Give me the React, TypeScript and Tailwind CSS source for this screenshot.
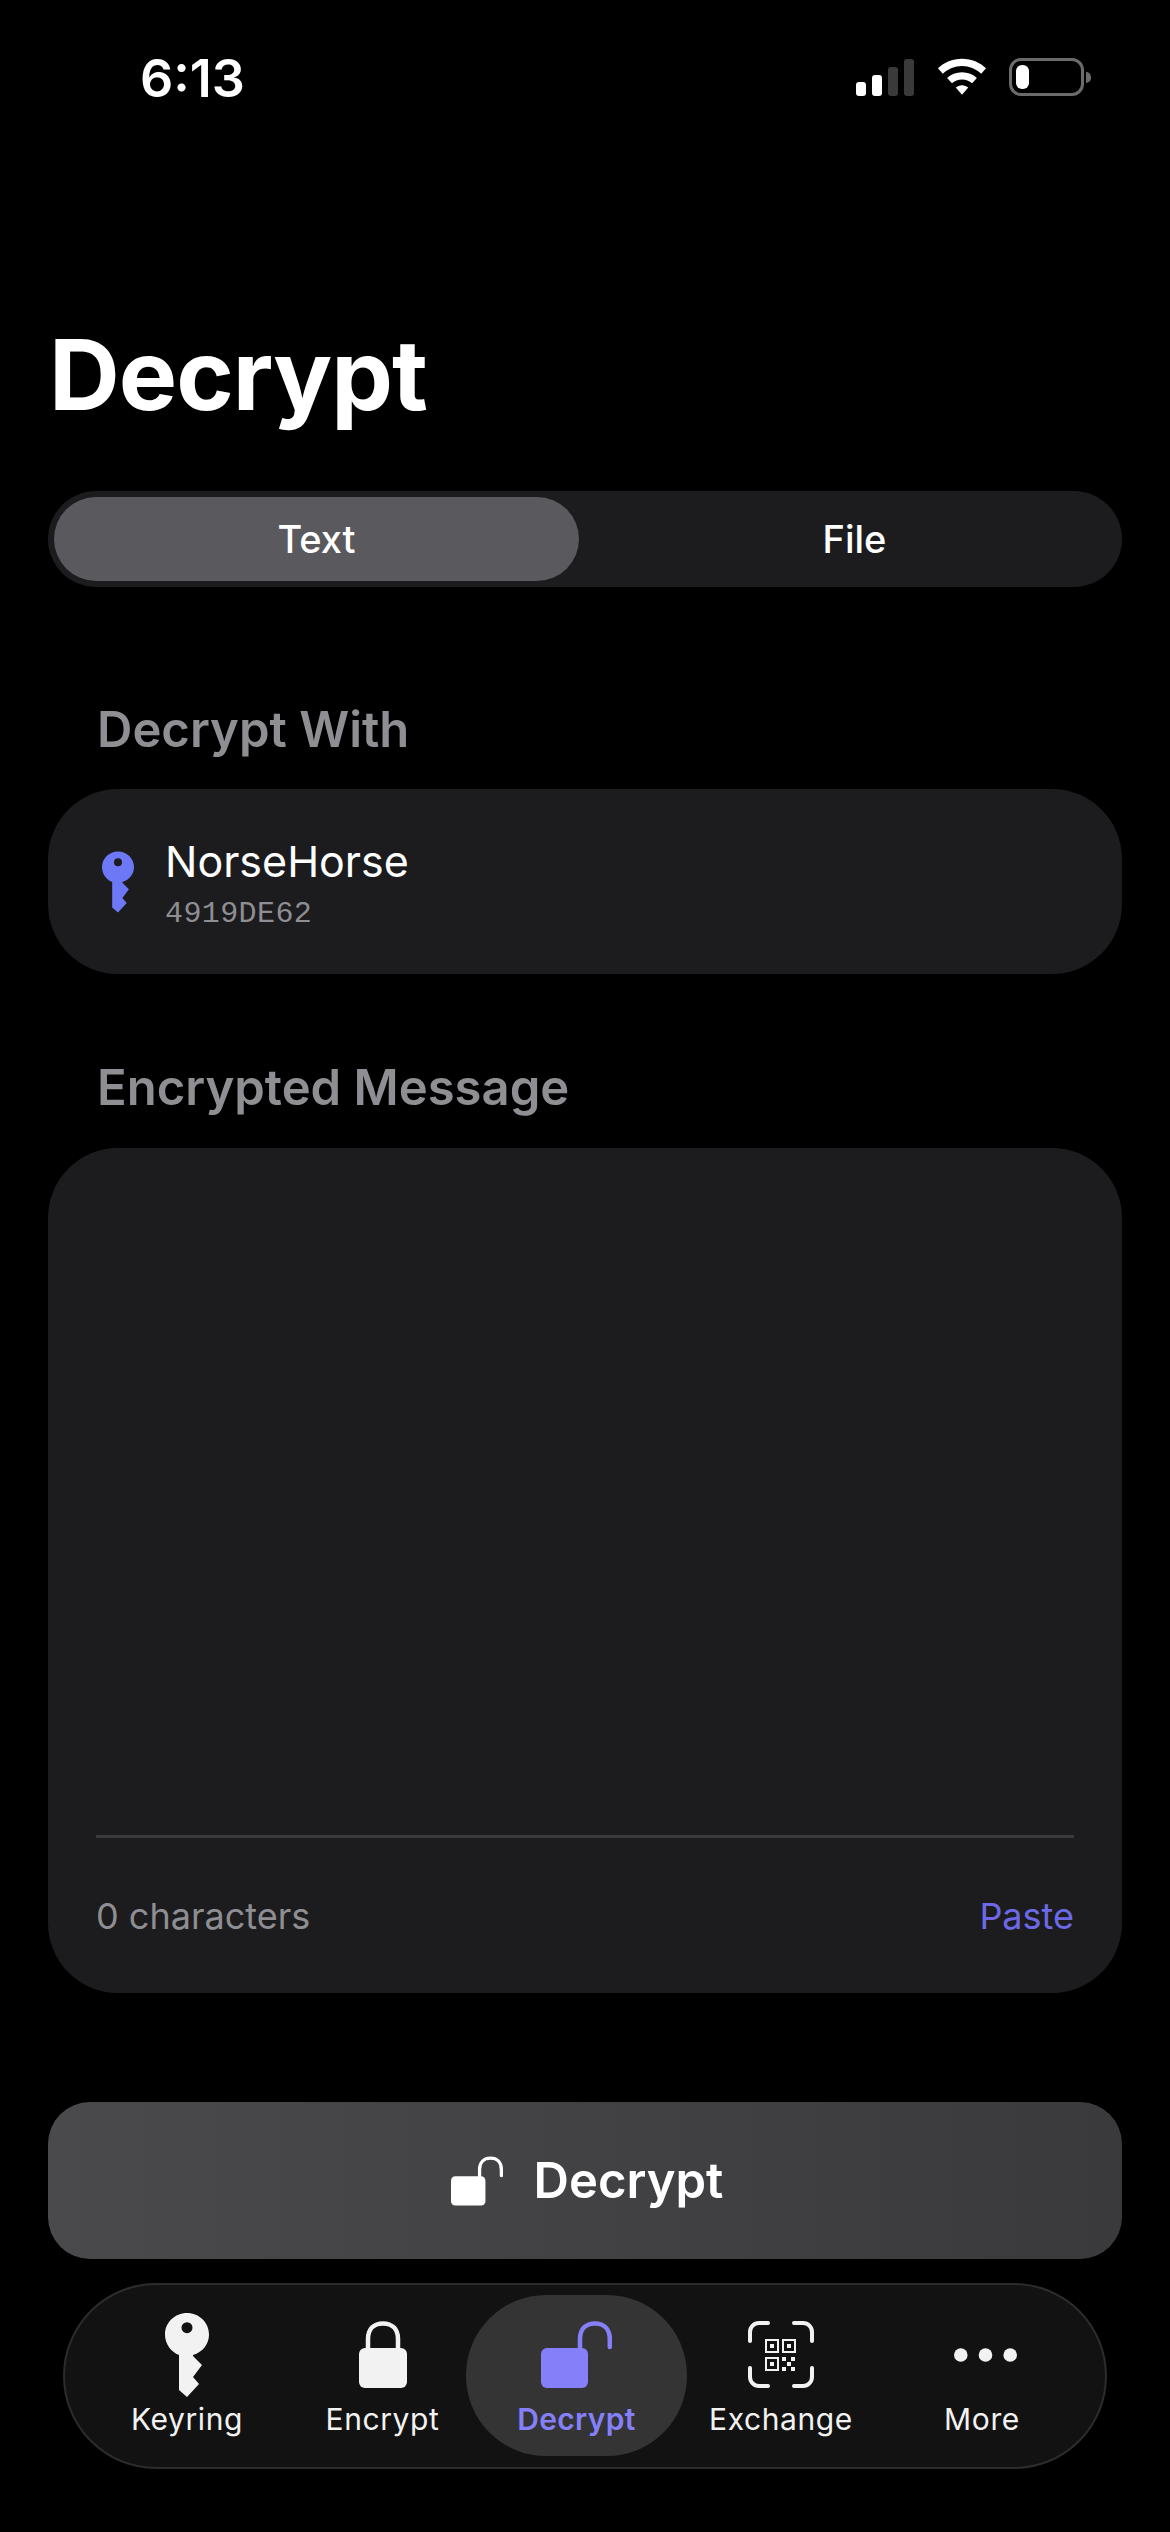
import React from "react";

const KeyIcon = ({ className, hole }: { className: string; hole: string }) => (
  <svg viewBox="0 0 44 84" className={className}>
    <path
      fill="currentColor"
      d="M22 0C9.800 0 0 9.600 0 21.500 0 31 6 39 14 42V77L22 84 34 71 28 64 37 52 28 43V42C38 39 44 31 44 21.500 44 9.600 34.200 0 22 0Z"
    />
    <circle cx="22" cy="14.700" r="5.500" fill={hole} />
  </svg>
);

const LockOpen = ({ className }: { className: string }) => (
  <svg viewBox="0 0 71 67" className={className}>
    <rect x="0" y="27" width="47" height="40" rx="6" fill="currentColor" />
    <path d="M39 30V18C39 8 45 2.400 54 2.400S68.800 8 68.800 18V26" fill="none" stroke="currentColor" strokeWidth="4.500" strokeLinecap="round" />
  </svg>
);

const LockClosed = ({ className }: { className: string }) => (
  <svg viewBox="0 0 48 67" className={className}>
    <rect x="0" y="27" width="48" height="40" rx="6" fill="currentColor" />
    <path d="M9 30V18C9 8 15 2.400 24 2.400S39 8 39 18V30" fill="none" stroke="currentColor" strokeWidth="4.500" />
  </svg>
);

const QrIcon = ({ className }: { className: string }) => (
  <svg viewBox="0 0 66 67" className={className} fill="none" stroke="currentColor">
    <path d="M2 20V11C2 6 6 2 11 2h9M46 2h9c5 0 9 4 9 9v9M64 47v9c0 5-4 9-9 9h-9M20 65h-9c-5 0-9-4-9-9v-9" strokeWidth="4" strokeLinecap="round" />
    <g strokeWidth="2">
      <rect x="18" y="19" width="12" height="12" />
      <rect x="35" y="19" width="12" height="12" />
      <rect x="18" y="37" width="12" height="12" />
    </g>
    <g fill="currentColor" stroke="none">
      <rect x="22" y="23" width="4" height="4" />
      <rect x="39" y="23" width="4" height="4" />
      <rect x="22" y="41" width="4" height="4" />
      <rect x="34" y="36" width="4" height="4" />
      <rect x="43" y="36" width="4" height="4" />
      <rect x="39" y="41" width="4" height="4" />
      <rect x="34" y="46" width="4" height="4" />
      <rect x="43" y="46" width="4" height="4" />
    </g>
  </svg>
);

const NavItem = ({ label, icon, className, active }: { label: string; icon: React.ReactNode; className: string; active?: boolean }) => (
  <div className={`${className} flex flex-col items-center justify-start`}>
    <div className="h-[67px] mt-[26px] flex items-end justify-center">{icon}</div>
    <div className={`mt-[13px] text-[30px] leading-[36px] ${active ? "text-[#8580fa] font-semibold tracking-[0.3px]" : "text-[#f2f2f2] font-normal tracking-[0.6px]"}`}>
      {label}
    </div>
  </div>
);

export default function App() {
  return (
    <div className="w-[1170px] h-[2532px] bg-black text-white flex flex-col overflow-hidden font-['Inter',sans-serif]">
      {/* status bar */}
      <div className="h-[154px] pl-[140px] pr-[79px] flex items-start justify-between shrink-0">
        <div className="mt-[49px] text-[52px] leading-[60px] font-semibold">6:13</div>
        <div className="mt-[58px] flex items-start">
          <svg viewBox="0 0 58 38" className="w-[58px] h-[38px] mr-[23px]">
            <rect x="0" y="24" width="10" height="14" rx="3" fill="#fff" />
            <rect x="16" y="17" width="10" height="21" rx="3" fill="#fff" />
            <rect x="32" y="9" width="10" height="29" rx="3" fill="#3a3a3a" />
            <rect x="48" y="1" width="10" height="37" rx="3" fill="#3a3a3a" />
          </svg>
          <svg viewBox="0 0 52 38" className="w-[50px] h-[38px] mr-[22px]">
            <path d="M26 0C16 0 7.500 3.800 1 10l5 5.500C11.500 10.500 18.500 7.500 26 7.500s14.500 3 20 8l5-5.500C44.500 3.800 36 0 26 0Z" fill="#fff" />
            <path d="M26 14c-6 0-11.500 2.300-15.500 6l5 5.500c2.800-2.500 6.500-4 10.500-4s7.700 1.500 10.500 4l5-5.500c-4-3.700-9.500-6-15.500-6Z" fill="#fff" />
            <path d="M26 27.500c-2.500 0-4.800 1-6.500 2.500L26 37.500l6.500-7.500c-1.700-1.500-4-2.500-6.500-2.500Z" fill="#fff" />
          </svg>
          <div className="w-[75px] h-[38px] rounded-[12px] border-[3px] border-[#6b6b6b] p-[4px]">
            <div className="w-[13px] h-[24px] rounded-[6px] bg-white" />
          </div>
          <div className="w-[5px] h-[11px] mt-[14px] ml-[2px] rounded-r-full bg-[#6b6b6b]" />
        </div>
      </div>

      {/* title */}
      <h1 className="mt-[160px] h-[122px] pl-[49px] shrink-0 text-[98px] leading-[122px] font-bold tracking-[-1px]">Decrypt</h1>

      {/* segmented control */}
      <div className="mt-[55px] mx-[48px] h-[96px] shrink-0 rounded-[48px] bg-[#1c1c1e] p-[6px] flex text-[38px] font-medium">
        <div className="w-[525px] rounded-[42px] bg-[#5a5a5e] flex items-center justify-center">Text</div>
        <div className="flex-1 pl-[14px] flex items-center justify-center">File</div>
      </div>

      {/* decrypt with */}
      <div className="mt-[113px] h-[60px] pl-[97px] shrink-0 text-[49px] leading-[60px] font-semibold text-[#8e8e93]">Decrypt With</div>
      <div className="mt-[29px] mx-[48px] h-[185px] shrink-0 rounded-[70px] bg-[#1c1c1e] pl-[54px] flex items-center">
        <KeyIcon className="w-[32px] h-[62px] text-[#6c78f6]" hole="#1c1c1e" />
        <div className="ml-[31px] mt-[2px]">
          <div className="text-[43px] leading-[54px] text-white">NorseHorse</div>
          <div className="text-[30px] leading-[36px] mt-[8px] tracking-[0.400px] text-[#8e8e93] font-['Liberation_Mono','DejaVu_Sans_Mono',monospace]">4919DE62</div>
        </div>
      </div>

      {/* encrypted message */}
      <div className="mt-[84px] h-[60px] pl-[97px] shrink-0 text-[49px] leading-[60px] font-semibold text-[#8e8e93]">Encrypted Message</div>
      <div className="mt-[30px] mx-[48px] h-[845px] shrink-0 rounded-[70px] bg-[#1c1c1e] px-[48px] flex flex-col justify-end">
        <div className="h-[3px] bg-[#3a3a3c]" />
        <div className="h-[155px] flex items-center justify-between text-[36px]">
          <span className="text-[#8e8e93]">0 characters</span>
          <span className="text-[#6d69e6]">Paste</span>
        </div>
      </div>

      {/* decrypt button */}
      <div className="mt-[109px] mx-[48px] h-[157px] shrink-0 rounded-[42px] bg-gradient-to-r from-[#4a4a4c] to-[#3a3a3c] pl-[4px] flex items-center justify-center">
        <LockOpen className="w-[52px] h-[50px] text-white" />
        <span className="ml-[31px] text-[49px] font-semibold">Decrypt</span>
      </div>

      {/* tab bar */}
      <div className="mt-[24px] mx-[63px] h-[186px] shrink-0 rounded-[93px] bg-[#121212] border-[2px] border-[#2c2c2e] flex items-stretch pt-[10px] pb-[11px] pl-[30px]">
        <NavItem className="w-[184px]" label="Keyring" icon={<KeyIcon className="w-[44px] h-[84px] -mb-[9px] text-[#f2f2f2]" hole="#121212" />} />
        <NavItem className="w-[187px] pl-[20px]" label="Encrypt" icon={<LockClosed className="w-[48px] h-[67px] text-[#f2f2f2]" />} />
        <NavItem className="w-[221px] rounded-[80px] bg-[#343434]" active label="Decrypt" icon={<LockOpen className="w-[71px] h-[67px] text-[#8580fa]" />} />
        <NavItem className="w-[188px]" label="Exchange" icon={<QrIcon className="w-[66px] h-[67px] text-[#f2f2f2]" />} />
        <NavItem
          className="w-[214px]"
          label="More"
          icon={
            <svg viewBox="0 0 63 14" className="w-[63px] h-[14px] mb-[26px] ml-[6px] text-[#f2f2f2]">
              <circle cx="6.800" cy="7" r="6.800" fill="currentColor" />
              <circle cx="31.500" cy="7" r="6.800" fill="currentColor" />
              <circle cx="56.200" cy="7" r="6.800" fill="currentColor" />
            </svg>
          }
        />
      </div>
    </div>
  );
}
